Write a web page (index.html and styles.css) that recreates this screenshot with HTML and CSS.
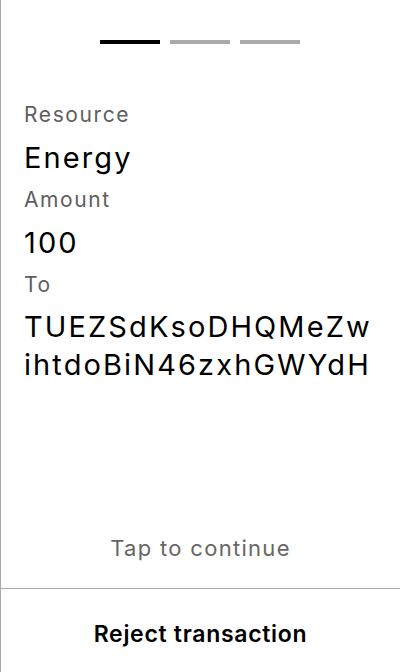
FILE: index.html
```html
<!DOCTYPE html>
<html lang="en">
<head>
<meta charset="utf-8">
<title>Confirm transaction</title>
<link rel="stylesheet" href="styles.css">
</head>
<body>
<div class="screen">
  <div class="steps">
    <span class="step active"></span>
    <span class="step"></span>
    <span class="step"></span>
  </div>
  <div class="details">
    <div class="label">Resource</div>
    <div class="value">Energy</div>
    <div class="label">Amount</div>
    <div class="value">100</div>
    <div class="label">To</div>
    <div class="value address">TUEZSdKsoDHQMeZwihtdoBiN46zxhGWYdH</div>
  </div>
  <div class="tap">Tap to continue</div>
  <div class="reject">Reject transaction</div>
</div>
</body>
</html>
```

FILE: styles.css
```css
html, body {
  margin: 0;
  padding: 0;
  background: #ffffff;
}
body {
  font-family: Inter, "Noto Sans", sans-serif;
  color: #000000;
}
.screen {
  box-sizing: border-box;
  height: 672px;
  border-left: 1px solid #aaaaaa;
  display: flex;
  flex-direction: column;
}
.steps {
  display: flex;
  justify-content: center;
  gap: 10px;
  padding-top: 40px;
  padding-right: 1px;
}
.step {
  display: block;
  width: 60px;
  height: 4px;
  background: #aaaaaa;
}
.step.active {
  background: #000000;
}
.details {
  margin-top: 49px;
  padding: 0 24px 0 23px;
}
.label {
  font-size: 21px;
  line-height: 28px;
  padding: 8px 0 9px;
  letter-spacing: 1.6px;
  color: #5e5e5e;
}
.value {
  font-size: 29px;
  line-height: 39px;
  letter-spacing: 2.1px;
  color: #000000;
}
.value + .label {
  padding-top: 9px;
}
.address {
  line-height: 38px;
  word-break: break-all;
}
.tap {
  margin-top: auto;
  text-align: center;
  font-size: 22px;
  line-height: 28px;
  letter-spacing: 1.3px;
  color: #666666;
  padding-bottom: 26px;
  border-bottom: 1px solid #aaaaaa;
}
.reject {
  text-align: center;
  font-size: 23px;
  font-weight: 600;
  line-height: 75px;
  padding-top: 8px;
  letter-spacing: 0.7px;
  color: #000000;
}
```
